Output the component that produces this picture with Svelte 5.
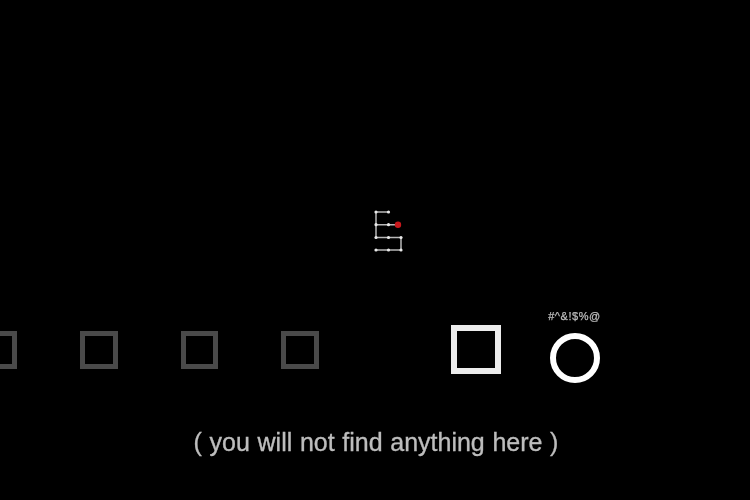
<script>
  const caption = '( you will not find anything here )';
  const dots = [
    [3, 3], [15.5, 3],
    [3, 15.7], [15.5, 15.7],
    [3, 28.5], [15.5, 28.5], [28, 28.5],
    [3, 41], [15.5, 41], [28, 41]
  ];
</script>

<main class="stage">
  <svg class="maze" width="32" height="44" viewBox="0 0 32 44">
    <path d="M15.5 3H3V28.5H28V41H3M3 15.7H25" />
    {#each dots as [x, y]}
      <circle cx={x} cy={y} r="1.6" />
    {/each}
    <circle class="player" cx="25" cy="15.7" r="3.2" />
  </svg>

  <div class="row">
    <div class="squares">
      <div class="box"></div>
      <div class="box"></div>
      <div class="box"></div>
      <div class="box"></div>
    </div>
    <div class="big"></div>
    <div class="target">
      <span class="curse">#^&amp;!$%@</span>
      <div class="ring"></div>
    </div>
  </div>

  <p class="caption">{caption}</p>
</main>

<style>
  :global(body) {
    background: #000;
    overflow: hidden;
  }

  .stage {
    width: 750px;
    height: 500px;
    overflow: hidden;
    display: flex;
    flex-direction: column;
    background: #000;
    padding-top: 209px;
    box-sizing: border-box;
    filter: blur(0.35px);
  }

  .maze {
    display: block;
    margin-left: 373px;
    flex: none;
  }

  .maze path {
    fill: none;
    stroke: #b8b8b8;
    stroke-width: 1.5;
  }

  .maze circle {
    fill: #e8e8e8;
  }

  .maze .player {
    fill: #c8181c;
  }

  .row {
    display: flex;
    align-items: flex-start;
    margin-top: 72px;
    margin-left: -20.5px;
    flex: none;
  }

  .squares {
    display: flex;
    align-items: center;
    gap: 63px;
    height: 49px;
  }

  .box {
    width: 37.5px;
    height: 38px;
    border: 5px solid #4a4a4a;
    box-sizing: border-box;
    flex: none;
  }

  .big {
    width: 50px;
    height: 49px;
    border: 6px solid #ececec;
    box-sizing: border-box;
    margin-left: 132px;
    flex: none;
  }

  .target {
    display: flex;
    flex-direction: column;
    align-items: center;
    gap: 11px;
    width: 50px;
    margin-left: 49px;
    margin-top: -14px;
    flex: none;
  }

  .curse {
    font: 11px/11px "Liberation Sans", Arial, sans-serif;
    letter-spacing: 0.55px;
    color: #bdbdbd;
    -webkit-text-stroke: 0.25px #bdbdbd;
    white-space: nowrap;
  }

  .ring {
    width: 50px;
    height: 50px;
    border: 6px solid #fff;
    border-radius: 50%;
    box-sizing: border-box;
  }

  .caption {
    margin: 45px 0 0;
    font: 25px/28px "Liberation Sans", Arial, sans-serif;
    word-spacing: 0.7px;
    color: #bdbdbd;
    -webkit-text-stroke: 0.35px #bdbdbd;
    text-align: center;
    padding-left: 2px;
  }
</style>
